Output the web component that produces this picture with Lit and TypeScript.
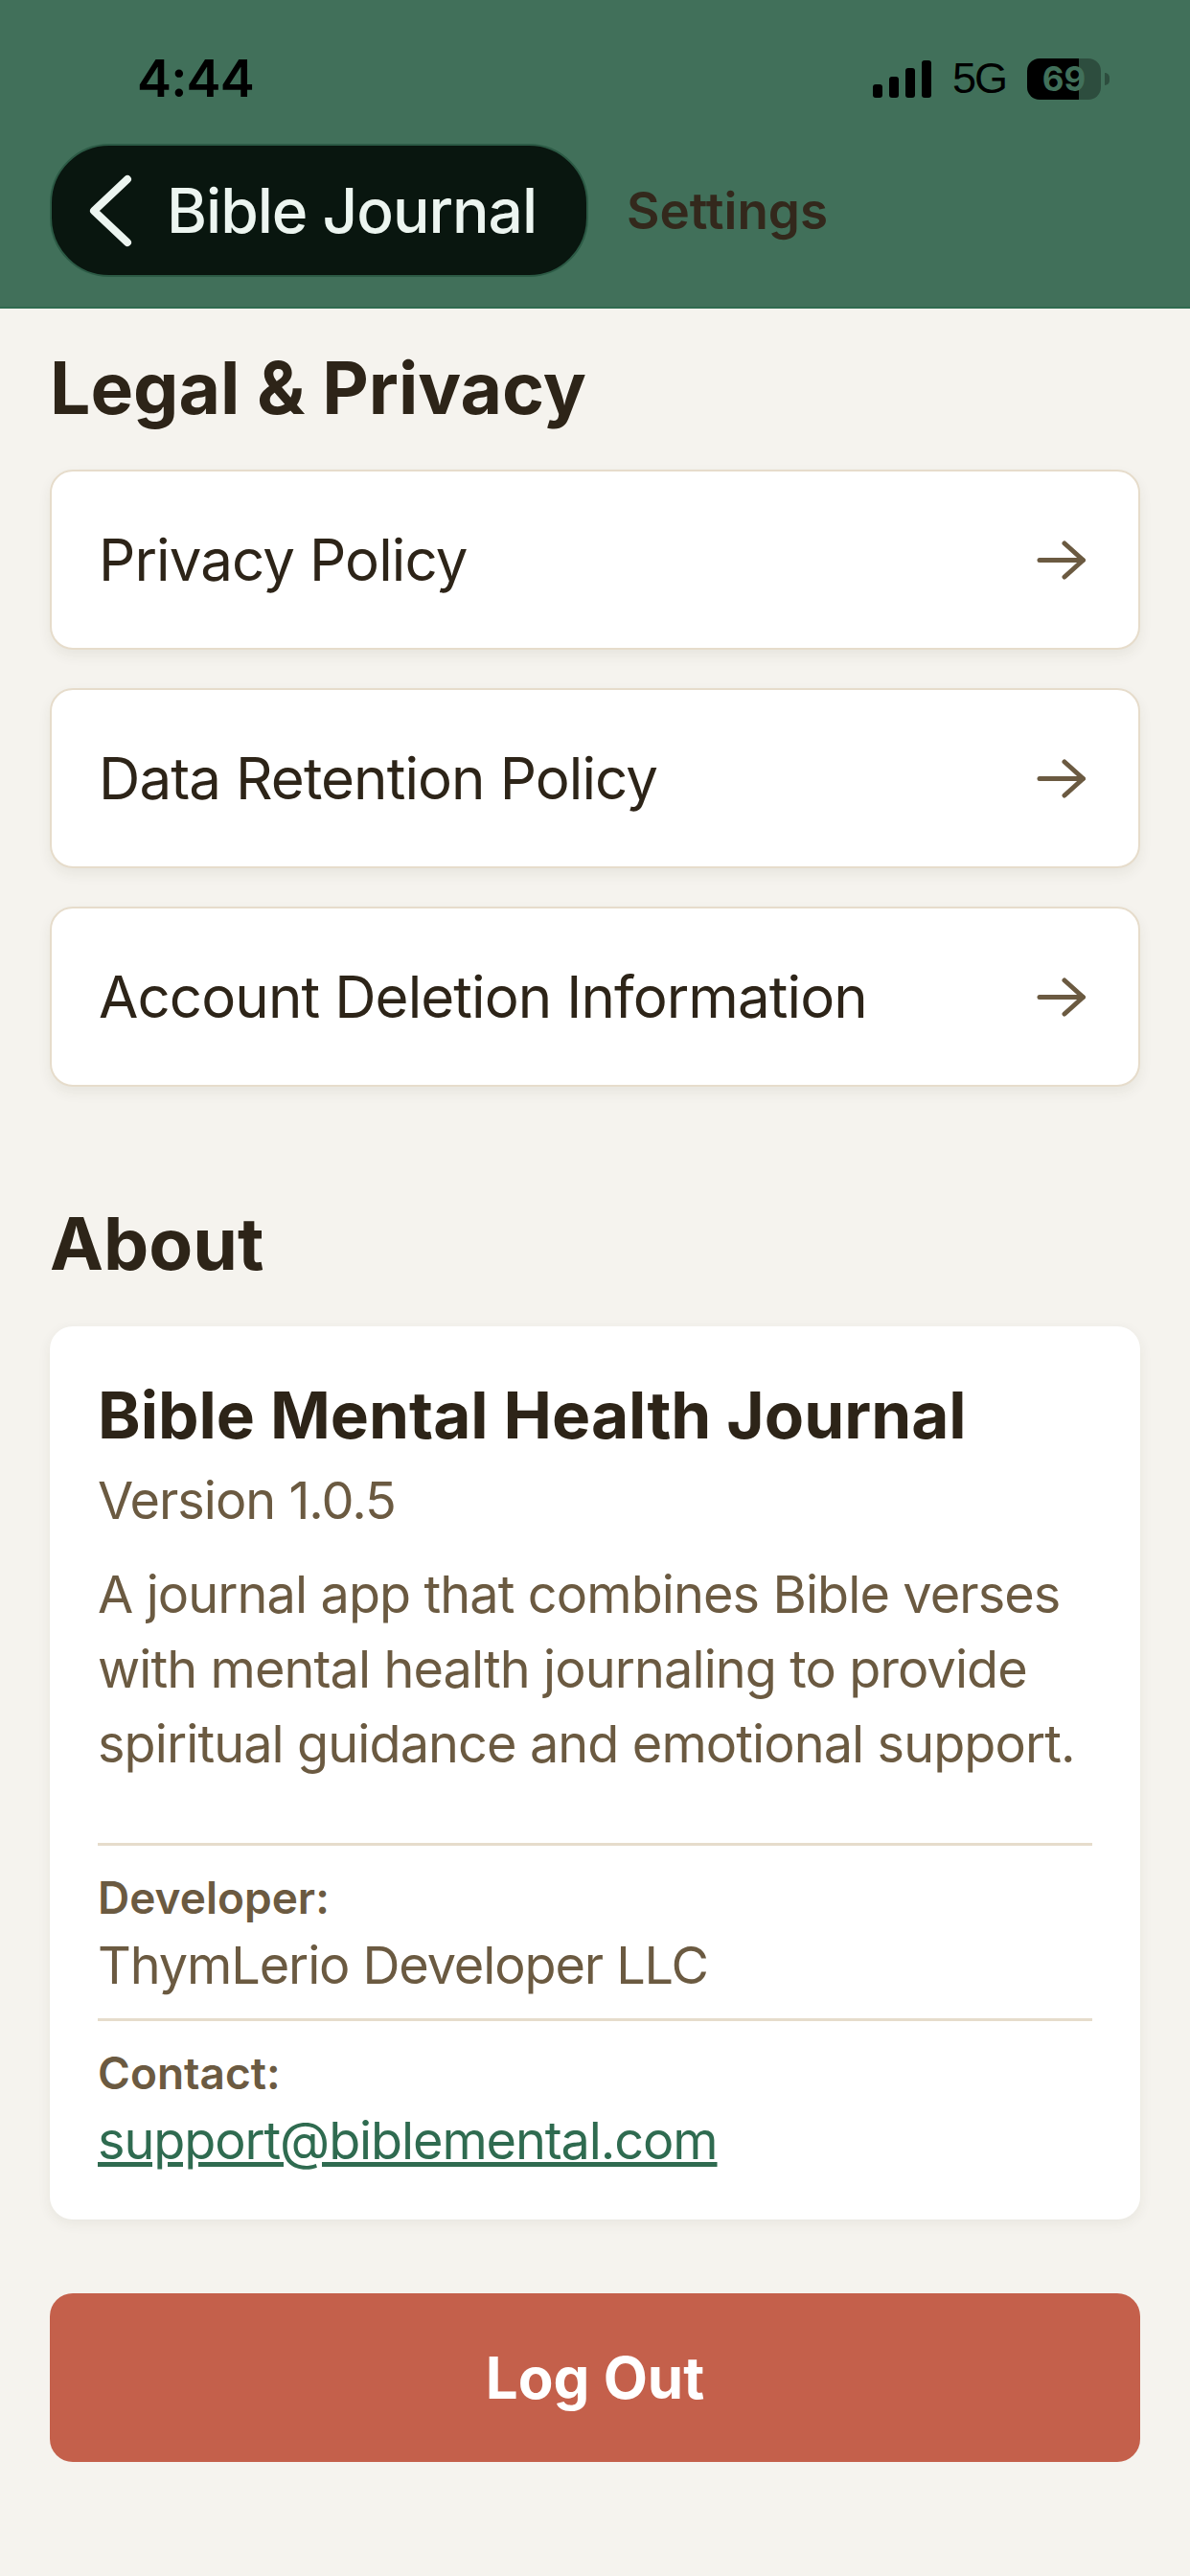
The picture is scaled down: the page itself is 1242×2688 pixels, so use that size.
import { LitElement, html, css } from "lit";
import { customElement } from "lit/decorators.js";

const arrow = html`<svg class="arrow" viewBox="0 0 51 41" fill="none" stroke="#6b5a41" stroke-width="5" stroke-linecap="round" stroke-linejoin="round"><path d="M3 20.5H48"/><path d="M29 3L48.500 20.500L29 38"/></svg>`;

@customElement("app-root")
export class AppRoot extends LitElement {
  static styles = css`
    :host {
      display: block;
      width: 1242px;
      height: 2688px;
      background: #f5f3ee;
      font-family: Inter, "Liberation Sans", sans-serif;
      color: #2d2418;
      overflow: hidden;
    }
    .header {
      height: 322px;
      box-sizing: border-box;
      background: #41705a;
      border-bottom: 2px solid #2f6b50;
    }
    .status {
      height: 150px;
      box-sizing: border-box;
      padding: 52px 84px 0 143px;
      display: flex;
      justify-content: space-between;
      align-items: flex-start;
      color: #000;
    }
    .time {
      font-size: 54px;
      line-height: 60px;
      font-weight: 600;
      letter-spacing: -0.8px;
    }
    .status-right {
      display: flex;
      align-items: center;
      gap: 22px;
      height: 60px;
    }
    .net {
      font-size: 45px;
      letter-spacing: -2px;
      font-family: "Liberation Sans", sans-serif;
    }
    .battery {
      display: flex;
      align-items: center;
    }
    .batt-body {
      width: 77px;
      height: 43px;
      border-radius: 13px;
      background: linear-gradient(90deg, #000 0 70%, #2d4d3e 70%);
      color: #41705a;
      font-size: 35px;
      line-height: 43px;
      font-weight: 700;
      text-align: center;
    }
    .batt-cap {
      width: 5px;
      height: 13px;
      margin-left: 4px;
      border-radius: 0 5px 5px 0;
      background: #2d4d3e;
    }
    .nav {
      display: flex;
      align-items: center;
      padding-left: 52px;
      gap: 40px;
    }
    .pill {
      width: 562px;
      height: 139px;
      box-sizing: border-box;
      background: #09160f;
      border: 2px solid #2c5a45;
      border-radius: 62px;
      display: flex;
      align-items: center;
      padding-left: 36px;
      gap: 34px;
      color: #ecf5f0;
      font-size: 64px;
      letter-spacing: -1px;
      font-weight: 500;
    }
    .pill svg {
      width: 50px;
      height: 78px;
      flex: none;
    }
    .crumb {
      font-size: 53px;
      font-weight: 600;
      color: #33281c;
      line-height: 60px;
    }
    .content {
      padding: 0 52px;
    }
    h2 {
      margin: 0;
      font-size: 75px;
      line-height: 88px;
      font-weight: 700;
      color: #2d2418;
    }
    .legal-title {
      margin-top: 39px;
      margin-bottom: 41px;
    }
    .about-title {
      margin-top: 120px;
      margin-bottom: 42px;
    }
    .rows {
      display: flex;
      flex-direction: column;
      gap: 40px;
    }
    .row {
      height: 188px;
      box-sizing: border-box;
      display: flex;
      align-items: center;
      justify-content: space-between;
      padding: 0 55px 0 49px;
      background: #fff;
      border: 2px solid #e6dccb;
      border-radius: 24px;
      box-shadow: 0 6px 14px rgba(60, 50, 30, 0.07);
      font-size: 60px;
      letter-spacing: -0.9px;
      color: #2d2418;
    }
    .arrow {
      width: 51px;
      height: 41px;
      flex: none;
    }
    .card {
      box-sizing: border-box;
      height: 932px;
      padding: 53px 50px 0;
      background: #fff;
      border-radius: 24px;
      box-shadow: 0 4px 14px rgba(60, 50, 30, 0.07);
      color: #6b5a41;
      letter-spacing: -1px;
    }
    .app-name {
      font-size: 67.5px;
      line-height: 80px;
      font-weight: 700;
      letter-spacing: 0;
      color: #2d2418;
    }
    .version {
      font-size: 54px;
      line-height: 70px;
      margin-top: 14px;
    }
    .desc {
      font-size: 54px;
      line-height: 78px;
      letter-spacing: -0.9px;
      margin: 24px 0 64px;
    }
    .info {
      border-top: 3px solid #e6dccb;
      padding: 24px 0 18px;
    }
    .label {
      font-size: 46px;
      line-height: 60px;
      font-weight: 600;
      letter-spacing: 0;
    }
    .value {
      font-size: 54px;
      line-height: 75px;
      letter-spacing: -1.1px;
      padding-top: 3px;
    }
    .value a {
      color: #2f6b50;
      text-decoration: underline;
    }
    .logout {
      height: 176px;
      margin-top: 77px;
      display: flex;
      align-items: center;
      justify-content: center;
      background: #c4604b;
      border-radius: 24px;
      color: #fff;
      font-size: 60px;
      font-weight: 700;
    }
  `;

  render() {
    return html`
      <div class="header">
        <div class="status">
          <div class="time">4:44</div>
          <div class="status-right">
            <svg width="61" height="39" viewBox="0 0 61 39" fill="#000"><rect x="0" y="25" width="10" height="14" rx="3"/><rect x="17" y="17" width="10" height="22" rx="3"/><rect x="34" y="8" width="10" height="31" rx="3"/><rect x="51" y="0" width="10" height="39" rx="3"/></svg>
            <div class="net">5G</div>
            <div class="battery"><div class="batt-body">69</div><div class="batt-cap"></div></div>
          </div>
        </div>
        <div class="nav">
          <div class="pill">
            <svg viewBox="0 0 50 78" fill="none" stroke="#ecf5f0" stroke-width="8" stroke-linecap="round" stroke-linejoin="round"><path d="M43 6L8 39L43 72"/></svg>
            <span>Bible Journal</span>
          </div>
          <div class="crumb">Settings</div>
        </div>
      </div>
      <div class="content">
        <h2 class="legal-title">Legal &amp; Privacy</h2>
        <div class="rows">
          <div class="row"><span>Privacy Policy</span>${arrow}</div>
          <div class="row"><span>Data Retention Policy</span>${arrow}</div>
          <div class="row"><span>Account Deletion Information</span>${arrow}</div>
        </div>
        <h2 class="about-title">About</h2>
        <div class="card">
          <div class="app-name">Bible Mental Health Journal</div>
          <div class="version">Version 1.0.5</div>
          <div class="desc">A journal app that combines Bible verses with mental health journaling to provide spiritual guidance and emotional support.</div>
          <div class="info"><div class="label">Developer:</div><div class="value">ThymLerio Developer LLC</div></div>
          <div class="info"><div class="label">Contact:</div><div class="value"><a>support@biblemental.com</a></div></div>
        </div>
        <div class="logout">Log Out</div>
      </div>
    `;
  }
}
